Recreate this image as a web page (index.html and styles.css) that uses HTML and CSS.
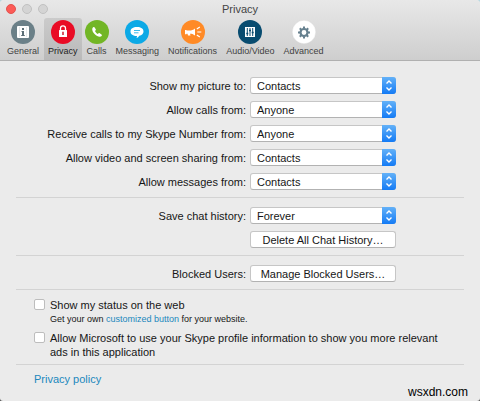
FILE: index.html
```html
<!DOCTYPE html>
<html lang="en">
<head>
<meta charset="utf-8">
<title>Privacy</title>
<link rel="stylesheet" href="styles.css">
</head>
<body>
<div class="window">
  <header class="toolbar">
    <div class="titlebar">
      <div class="lights"><span class="light close"></span><span class="light"></span><span class="light"></span></div>
      <h1 class="title">Privacy</h1>
    </div>
    <nav class="tabs">
      <button class="tab" type="button">
        <svg class="icon" viewBox="0 0 24 24"><circle cx="12" cy="12" r="12" fill="#6b8088"/><rect x="6" y="6" width="12" height="12" rx="1" fill="#fff"/><path d="M11 8h2v2h-2zM10.500 11h2.500v4h.8v1h-3.600v-1h.8v-3h-.5z" fill="#5c6f77"/><path d="M8.500 7v10M15.500 7v10" stroke="#d5dcdf" stroke-width=".6"/></svg>
        General</button>
      <button class="tab selected" type="button" aria-current="page">
        <svg class="icon" viewBox="0 0 24 24"><circle cx="12" cy="12" r="12" fill="#e90c25"/><path d="M9.500 10.500V8.300a2.500 2.500 0 0 1 5 0v2.200" fill="none" stroke="#fff" stroke-width="1.300"/><rect x="8" y="10" width="8" height="7" rx=".6" fill="#fff"/><path d="M11.300 11.800h1.400v3.200h-1.400z" fill="#c60c20"/></svg>
        Privacy</button>
      <button class="tab" type="button">
        <svg class="icon" viewBox="0 0 24 24"><circle cx="12" cy="12" r="12" fill="#72b626"/><path d="M7.400 8.300c.5-1.200 1.600-1.600 2.200-.9l1.200 1.900c.4.800-.6 1.300-.7 1.900.5 1.200 1.500 2.200 2.700 2.700.6-.1 1.100-1.100 1.900-.7l1.800 1.200c.8.600.3 1.700-.9 2.200-1.600.6-3.900-.4-5.800-2.300-2-1.900-3-4.400-2.400-6z" fill="#fff"/></svg>
        Calls</button>
      <button class="tab" type="button">
        <svg class="icon" viewBox="0 0 24 24"><circle cx="12" cy="12" r="12" fill="#0ca9e6"/><path d="M12 7c4 0 6.500 1.700 6.500 4.500 0 2.200-1.600 3.800-4.200 4.300-.7 1.200-1.700 2-2.900 2.200.5-.6.700-1.300.6-2-4 0-6.500-1.700-6.500-4.500S8 7 12 7z" fill="#fff"/><path d="M9 10.500h6M9 12.800h4.500" stroke="#0ca9e6" stroke-width=".8"/></svg>
        Messaging</button>
      <button class="tab" type="button">
        <svg class="icon" viewBox="0 0 24 24"><circle cx="12" cy="12" r="12" fill="#ff8a26"/><path d="M4 10h1.500v.5h3c2 0 3.800-.5 5.500-2v7c-1.700-1.300-3.300-1.700-5-1.700l.5 1.700H7l-.5-1.700h-1v.4H4z" fill="#fff"/><path d="M15.800 9l3-2M16.300 12h4M15.800 15l3 2" stroke="#fff" stroke-width="1.200"/></svg>
        Notifications</button>
      <button class="tab" type="button">
        <svg class="icon" viewBox="0 0 24 24"><circle cx="12" cy="12" r="12" fill="#084c70"/><rect x="7" y="7" width="10" height="10" fill="#fff"/><path d="M9.300 8v8M12 8v8M14.700 8v8" stroke="#084c70" stroke-width="1"/><path d="M8.300 13.500h2M11 10.500h2M13.700 12.500h2" stroke="#084c70" stroke-width="1.300"/></svg>
        Audio/Video</button>
      <button class="tab" type="button">
        <svg class="icon" viewBox="0 0 24 24"><circle cx="12" cy="12" r="11.800" fill="#fff" stroke="#d2d2d2" stroke-width=".4"/><circle cx="12" cy="12.500" r="3.500" fill="none" stroke="#66808e" stroke-width="2.200"/><path d="M12 6.500v2M12 16.500v2M6 12.500h2M16 12.500h2M7.800 8.300l1.400 1.400M14.800 15.300l1.400 1.400M7.800 16.700l1.400-1.400M14.800 9.700l1.400-1.400" stroke="#66808e" stroke-width="2"/></svg>
        Advanced</button>
    </nav>
  </header>

  <main class="content">
    <section class="group">
      <div class="row"><label for="picture">Show my picture to:</label><span class="popup"><select id="picture"><option>Contacts</option><option>Anyone</option></select><svg class="arrows" viewBox="0 0 14 17"><path d="M4.500 6.500L7 4l2.500 2.500M4.500 10.500L7 13l2.500-2.500"/></svg></span></div>
      <div class="row"><label for="calls">Allow calls from:</label><span class="popup"><select id="calls"><option>Anyone</option><option>Contacts</option></select><svg class="arrows" viewBox="0 0 14 17"><path d="M4.500 6.500L7 4l2.500 2.500M4.500 10.500L7 13l2.500-2.500"/></svg></span></div>
      <div class="row"><label for="number">Receive calls to my Skype Number from:</label><span class="popup"><select id="number"><option>Anyone</option><option>Contacts</option></select><svg class="arrows" viewBox="0 0 14 17"><path d="M4.500 6.500L7 4l2.500 2.500M4.500 10.500L7 13l2.500-2.500"/></svg></span></div>
      <div class="row"><label for="sharing">Allow video and screen sharing from:</label><span class="popup"><select id="sharing"><option>Contacts</option><option>Anyone</option></select><svg class="arrows" viewBox="0 0 14 17"><path d="M4.500 6.500L7 4l2.500 2.500M4.500 10.500L7 13l2.500-2.500"/></svg></span></div>
      <div class="row"><label for="messages">Allow messages from:</label><span class="popup"><select id="messages"><option>Contacts</option><option>Anyone</option></select><svg class="arrows" viewBox="0 0 14 17"><path d="M4.500 6.500L7 4l2.500 2.500M4.500 10.500L7 13l2.500-2.500"/></svg></span></div>
    </section>
    <section class="group">
      <div class="row"><label for="history">Save chat history:</label><span class="popup"><select id="history"><option>Forever</option></select><svg class="arrows" viewBox="0 0 14 17"><path d="M4.500 6.500L7 4l2.500 2.500M4.500 10.500L7 13l2.500-2.500"/></svg></span></div>
      <div class="row"><span></span><button class="push" type="button">Delete All Chat History…</button></div>
    </section>
    <section class="group">
      <div class="row"><label for="blocked">Blocked Users:</label><button class="push" id="blocked" type="button">Manage Blocked Users…</button></div>
    </section>
    <section class="group options">
      <div class="option">
        <input type="checkbox" id="status">
        <div><label for="status">Show my status on the web</label>
        <p class="hint">Get your own <a href="#">customized button</a> for your website.</p></div>
      </div>
      <div class="option">
        <input type="checkbox" id="ads">
        <label for="ads">Allow Microsoft to use your Skype profile information to show you more relevant ads in this application</label>
      </div>
    </section>
    <footer class="group footer"><a href="#">Privacy policy</a></footer>
  </main>
  <div class="credit">wsxdn.com</div>
</div>
</body>
</html>
```
FILE: styles.css
```css
* { box-sizing: border-box; }

body {
  margin: 0;
  background: linear-gradient(#b9d9e2, #555);
  color: #161616;
  font: 11px/14px "Liberation Sans", Arial, sans-serif;
}

button, select { font: inherit; color: inherit; }

a { color: #2188bd; text-decoration: none; }

.window {
  position: relative;
  min-height: 100vh;
  overflow: hidden;
  border-radius: 4px 4px 3px 3px;
  background: #ebebeb;
}

.toolbar {
  border-bottom: 1px solid #b0b0b0;
  background: linear-gradient(#e8e8e8, #cecece);
}

.titlebar {
  display: grid;
  grid-template-columns: 1fr auto 1fr;
  align-items: center;
  height: 18px;
  padding: 0 6px;
}

.lights { display: flex; gap: 6px; }

.light {
  width: 10px;
  height: 10px;
  border: 1px solid #c0c0c0;
  border-radius: 50%;
  background: #d4d4d4;
}

.close { border-color: #e2524e; background: #fc5b57; }

.title {
  margin: 0;
  color: #444;
  font-size: 11px;
  font-weight: normal;
}

.tabs { display: flex; gap: 1px; padding-left: 3px; }

.tab {
  display: flex;
  flex-direction: column;
  align-items: center;
  gap: 2px;
  height: 42px;
  padding: 2px 4px 0;
  border: 0;
  border-radius: 3px 3px 0 0;
  background: none;
  color: #424242;
  font-size: 9px;
  line-height: 11px;
}

.selected { background: linear-gradient(#cbcbcb, #b9b9b9); color: #222; }

.icon { width: 24px; height: 24px; margin: 0 -2px; }

.content { padding: 9px 16px 0; }

.group {
  display: grid;
  gap: 7px;
  padding: 7px 0;
}

.group + .group { padding-top: 9px; border-top: 1px solid #d3d3d3; }

.row {
  display: grid;
  grid-template-columns: 230fr 146fr 64fr;
  column-gap: 4px;
  align-items: center;
  height: 17px;
}

.row > label { text-align: right; white-space: nowrap; }

.popup { position: relative; display: flex; }

.popup select {
  width: 100%;
  height: 17px;
  padding: 0 20px 0 6px;
  border: 1px solid #c6c6c6;
  border-bottom-color: #b2b2b2;
  border-radius: 3px;
  appearance: none;
  background: #fff;
}

.arrows {
  position: absolute;
  top: 0;
  right: 0;
  width: 14px;
  height: 17px;
  border-radius: 0 3px 3px 0;
  background: linear-gradient(#63b1f8, #147bf5);
  fill: none;
  stroke: #fff;
  stroke-width: 1.4;
  pointer-events: none;
}

.push {
  height: 17px;
  padding: 0;
  border: 1px solid #c6c6c6;
  border-bottom-color: #b2b2b2;
  border-radius: 3px;
  background: #fff;
  line-height: 14px;
  white-space: nowrap;
}

.options { gap: 5px; padding: 7px 18px 5px; }

.group + .options { padding-top: 8px; }

.option { display: flex; align-items: flex-start; gap: 5px; }

.option input {
  flex: none;
  width: 11px;
  height: 11px;
  margin: 1px 0 0;
  border: 1px solid #bdbdbd;
  border-radius: 2px;
  appearance: none;
  background: #fff;
}

.hint { margin: 0; font-size: 9px; }

.group + .footer { padding: 7px 18px; }

.credit {
  position: absolute;
  right: 12px;
  bottom: 2px;
  color: #000;
  font-size: 12px;
}
```
